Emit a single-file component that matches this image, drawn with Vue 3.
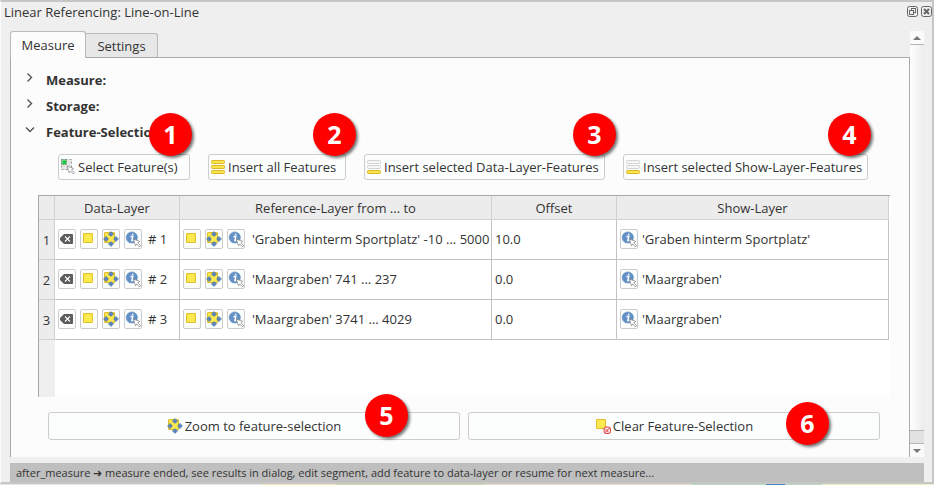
<script setup>
import { ref, h } from 'vue'

const tab = ref('Measure')
const groups = [
  { title: 'Measure:', open: false },
  { title: 'Storage:', open: false },
  { title: 'Feature-Selection:', open: true },
]
const actions = [
  { n: 1, label: 'Select Feature(s)', icon: 'pick' },
  { n: 2, label: 'Insert all Features', icon: 'rowsAll' },
  { n: 3, label: 'Insert selected Data-Layer-Features', icon: 'rowsSel' },
  { n: 4, label: 'Insert selected Show-Layer-Features', icon: 'rowsSel' },
]
const rows = [
  { id: 1, refText: "'Graben hinterm Sportplatz' -10 ... 5000", offset: '10.0', show: "'Graben hinterm Sportplatz'" },
  { id: 2, refText: "'Maargraben' 741 ... 237", offset: '0.0', show: "'Maargraben'" },
  { id: 3, refText: "'Maargraben' 3741 ... 4029", offset: '0.0', show: "'Maargraben'" },
]
const titles = { remove: 'Remove', square: 'Highlight', zoom: 'Zoom to', info: 'Show form' }

const yellow = { fill: '#fce94f', stroke: '#e0bd2a' }
const cursor = (x, y) =>
  h('path', {
    d: 'M0 0L6.500 2.400L4.600 3.800L7.500 6.700L6.300 7.900L3.500 5L2.200 6.800Z',
    transform: `translate(${x} ${y})`, fill: '#fff', stroke: '#888', 'stroke-width': 0.8, 'stroke-linejoin': 'round',
  })
const bar = (y, on) =>
  h('rect', { x: 1.5, y, width: 13, height: 3, rx: 0.8, fill: on ? '#fbe34a' : '#f6f6f6', stroke: on ? '#dab82c' : '#d2d3d3' })

const art = {
  pick: () => [
    h('rect', { x: 1.5, y: 0.5, width: 10, height: 10, fill: '#e6e6e6', stroke: '#999', 'stroke-dasharray': '2 2' }),
    h('rect', { x: 1.5, y: 0.5, width: 5, height: 5, fill: '#b5d9bb', stroke: '#6f9a76', 'stroke-dasharray': '2 1' }),
    h('rect', { x: 2.5, y: 1.5, width: 3.5, height: 3.5, fill: '#0fc93a' }),
    cursor(7, 7),
  ],
  rowsAll: () => [bar(1.5, true), bar(6.5, true), bar(11.5, true)],
  rowsSel: () => [bar(1.5, false), bar(6.5, false), bar(11.5, true)],
  remove: () => [
    h('path', { d: 'M5 3H13Q14 3 14 4V12Q14 13 13 13H5L1 9V7Z', fill: '#5c5c5c' }),
    h('path', { d: 'M6 5.500L11 10.500M11 5.500L6 10.500', stroke: '#fff', 'stroke-width': 1.1 }),
  ],
  square: () => [h('rect', { x: 2.5, y: 2.5, width: 9, height: 9, rx: 0.5, ...yellow })],
  zoom: () => [
    h('rect', { x: 1.5, y: 1.5, width: 10, height: 10, rx: 0.5, ...yellow }),
    h('path', {
      d: 'M8 .5L10.800 3.300L9.200 3.500V5H6.800V3.500L5.200 3.300ZM8 15.500L10.800 12.700L9.200 12.500V11H6.800V12.500L5.200 12.700ZM.5 8L3.300 5.200L3.500 6.800H5V9.200H3.500L3.300 10.800ZM15.500 8L12.700 5.200L12.500 6.800H11V9.200H12.500L12.700 10.800Z',
      fill: '#5b87bd', stroke: '#4c719f', 'stroke-width': 0.5,
    }),
  ],
  info: () => [
    h('circle', { cx: 6.8, cy: 6.5, r: 5.6, fill: '#6391c6', stroke: '#5a86b8', 'stroke-width': 0.6 }),
    h('path', { d: 'M5.500 5.700L7.800 5.200L6.900 9.500L8.300 9.200M7.600 2.700V4', fill: 'none', stroke: '#fff', 'stroke-width': 1.4 }),
    cursor(8.3, 8),
  ],
  clear: () => [
    h('rect', { x: 1.5, y: 1.5, width: 9, height: 9, rx: 0.5, ...yellow }),
    h('rect', { x: 9, y: 9, width: 6.5, height: 6.5, rx: 2, fill: '#fbdcdc', stroke: '#dc4048' }),
    h('path', { d: 'M10 14.500L14.500 10M10.500 11.500L13.500 14', stroke: '#dc3038', 'stroke-width': 0.9 }),
  ],
}
const Icon = (props) =>
  h('svg', { width: 16, height: 16, viewBox: '0 0 16 16', 'aria-hidden': 'true' }, art[props.name]())
Icon.props = ['name']
</script>

<template>
  <div class="dock">
    <header class="titlebar">
      <span>Linear Referencing: Line-on-Line</span>
      <div class="winbtns">
        <button aria-label="Float">
          <svg width="11" height="11" viewBox="0 0 11 11"><rect x=".5" y=".5" width="10" height="10" rx="2" /><rect x="4.500" y="2.500" width="4" height="4" /><rect x="2.500" y="4.500" width="4" height="4" fill="#efefef" /></svg>
        </button>
        <button aria-label="Close">
          <svg width="11" height="11" viewBox="0 0 11 11"><rect x=".5" y=".5" width="10" height="10" rx="2" /><path d="M3 3L8 8M8 3L3 8" stroke-width="2" /></svg>
        </button>
      </div>
    </header>

    <div class="body">
      <div class="main">
        <div class="tabs" role="tablist">
          <button v-for="t in ['Measure', 'Settings']" :key="t" role="tab" class="tab" :class="{ active: tab === t }" :aria-selected="tab === t" @click="tab = t">{{ t }}</button>
        </div>

        <section class="pane">
          <button v-for="g in groups" :key="g.title" class="group" :aria-expanded="g.open">
            <svg width="10" height="10" viewBox="0 0 10 10"><path :d="g.open ? 'M1 2.500L5 6.500L9 2.500' : 'M2.500 0.500L6.500 4.500L2.500 8.500'" /></svg>
            <span>{{ g.title }}</span>
          </button>

          <div class="actions">
            <div v-for="a in actions" :key="a.n" class="slot">
              <button class="btn"><Icon :name="a.icon" />{{ a.label }}</button>
              <span class="badge" :class="'b' + a.n">{{ a.n }}</span>
            </div>
          </div>

          <div class="tablebox">
            <table>
              <colgroup><col class="c0" /><col class="c1" /><col class="c2" /><col class="c1" /><col /></colgroup>
              <thead>
                <tr><th></th><th>Data-Layer</th><th>Reference-Layer from ... to</th><th>Offset</th><th>Show-Layer</th></tr>
              </thead>
              <tbody>
                <tr v-for="r in rows" :key="r.id">
                  <th>{{ r.id }}</th>
                  <td>
                    <div class="cell">
                      <button v-for="i in ['remove', 'square', 'zoom', 'info']" :key="i" class="mini" :aria-label="titles[i]"><Icon :name="i" /></button>
                      <span class="num"># {{ r.id }}</span>
                    </div>
                  </td>
                  <td>
                    <div class="cell">
                      <button v-for="i in ['square', 'zoom', 'info']" :key="i" class="mini" :aria-label="titles[i]"><Icon :name="i" /></button>
                      <span class="reftext">{{ r.refText }}</span>
                    </div>
                  </td>
                  <td><div class="cell">{{ r.offset }}</div></td>
                  <td>
                    <div class="cell">
                      <button class="mini" :aria-label="titles.info"><Icon name="info" /></button>
                      <span>{{ r.show }}</span>
                    </div>
                  </td>
                </tr>
              </tbody>
            </table>
            <div class="gutter"></div>
          </div>

          <div class="footer">
            <div class="slot"><button class="btn big"><Icon name="zoom" />Zoom to feature-selection</button><span class="badge b5">5</span></div>
            <div class="slot"><button class="btn big"><Icon name="clear" />Clear Feature-Selection</button><span class="badge b6">6</span></div>
          </div>
        </section>
      </div>

      <div class="scroll">
        <button aria-label="Scroll up"><svg width="8" height="4" viewBox="0 0 8 4"><path d="M0 4L4 0L8 4Z" /></svg></button>
        <div class="thumb"></div>
        <div class="groove"></div>
        <button aria-label="Scroll down"><svg width="8" height="4" viewBox="0 0 8 4"><path d="M0 0L4 4L8 0Z" /></svg></button>
      </div>
    </div>

    <div class="status">after_measure ➜ measure ended, see results in dialog, edit segment, add feature to data-layer or resume for next measure...</div>
  </div>
  <div class="map"></div>
</template>

<style>
body { background: #efefef; }
</style>

<style scoped>
.dock {
  box-sizing: border-box;
  padding: 0 8px 0 9px;
  border: solid #c6c6c6;
  border-width: 2px 2px 2px 1px;
  border-left-color: #fafafa;
  background: #efefef;
  color: #333;
  font: 13px/18px "Open Sans", "Noto Sans", sans-serif;
}
button {
  margin: 0;
  padding: 0;
  border: 0;
  background: none;
  color: inherit;
  font: inherit;
}
svg { flex: none; display: block; }
.titlebar {
  display: flex;
  justify-content: space-between;
  height: 29px;
  margin: 0 -8px 0 -6px;
}
.titlebar span { padding-top: 1px; }
.winbtns { display: flex; gap: 3px; padding-top: 4px; align-items: flex-start; }
.winbtns svg { fill: none; stroke: #666; }
.body { display: flex; }
.main { flex: 1; min-width: 0; }
.tabs { display: flex; align-items: flex-end; height: 26px; }
.tab {
  width: 72px;
  height: 24px;
  border: 1px solid #b9b9b9;
  border-width: 1px 1px 0 0;
  border-radius: 0 3px 0 0;
  background: #e7e7e7;
}
.tab.active {
  position: relative;
  width: 76px;
  height: 27px;
  margin-bottom: -1px;
  border-width: 1px 1px 0;
  border-radius: 3px 3px 0 0;
  background: #fcfcfc;
}
.pane {
  box-sizing: border-box;
  padding: 9px 19px 17px 27px;
  border: 1px solid #aaa;
  border-bottom: 0;
  background: #fcfcfc;
}
.group {
  display: flex;
  align-items: center;
  gap: 11px;
  height: 26px;
  margin-left: -13px;
  font-weight: 700;
}
.group svg { fill: none; stroke: #555; stroke-width: 1.4; margin-bottom: 4px; }
.actions {
  display: grid;
  grid-template-columns: 132fr 138fr 241fr 245fr;
  gap: 18px;
  padding: 9px 22px 0 20px;
}
.slot { position: relative; min-width: 0; }
.btn {
  box-sizing: border-box;
  display: flex;
  align-items: center;
  gap: 2px;
  width: 100%;
  height: 26px;
  padding: 0 1px;
  border: 1px solid #ccc;
  border-radius: 3px;
  background: #fcfefe;
  white-space: nowrap;
}
.big { height: 28px; justify-content: center; }
.badge {
  position: absolute;
  top: -41px;
  width: 43px;
  height: 43px;
  border-radius: 50%;
  background: #fe0000;
  color: #fff;
  box-shadow: 2px 2px 3px rgba(0, 0, 0, .55);
  font: 700 25px/43px "Open Sans", sans-serif;
  text-align: center;
}
.b1 { right: -2px; }
.b2 { right: -10px; }
.b3 { right: -11px; }
.b4 { right: -3px; }
.b5 { top: -18px; right: 52px; }
.b6 { top: -10px; right: 51px; }
.tablebox {
  display: flex;
  flex-direction: column;
  height: 201px;
  margin-top: 15px;
  border: solid #a8a8a8;
  border-width: 1px 0 0 1px;
  background: #fff;
}
.gutter { flex: 1; width: 16px; background: #efefef; }
table {
  width: calc(100% - 1px);
  table-layout: fixed;
  border-collapse: separate;
  border-spacing: 0;
}
.c0 { width: 16px; }
.c1 { width: 125px; }
.c2 { width: 312px; }
th, td {
  box-sizing: border-box;
  height: 40px;
  padding: 0;
  border: solid #c3c3c3;
  border-width: 0 1px 1px 0;
}
th { background: #ececec; font-weight: 400; border-color: #d2d2d2; }
thead th { height: 24px; }
.cell {
  display: flex;
  align-items: center;
  gap: 4px;
  padding: 0 0 2px 3px;
  white-space: nowrap;
}
.mini {
  box-sizing: border-box;
  display: flex;
  align-items: center;
  justify-content: center;
  width: 18px;
  height: 20px;
  border: 1px solid #ccc;
  border-radius: 2px;
  background: #fcfefe;
}
.num { padding-left: 2px; }
.reftext { padding-left: 3px; }
.footer { display: flex; gap: 8px; padding: 15px 10px 0; }
.footer .slot { flex: 1; }
.scroll { display: flex; flex-direction: column; width: 14px; }
.scroll button {
  display: flex;
  align-items: center;
  justify-content: center;
  height: 13px;
  background: #fafafa;
}
.scroll path { fill: #777; }
.thumb {
  flex: 1;
  border: solid #b5b5b5;
  border-width: 1px 0;
  background: linear-gradient(90deg, #fff, #ececec);
}
.groove { height: 12px; background: #e2e2e2; border-bottom: 1px solid #b5b5b5; }
.status {
  margin-top: 6px;
  padding-left: 6px;
  background: #bfbfbf;
  font-size: 11px;
  line-height: 19px;
  white-space: nowrap;
}
.map {
  height: 1px;
  background: linear-gradient(90deg, #e6e6e6 28%, #f0e4b8 28% 36%, #cbdcae 36% 52%, #eadfc0 52% 74%, #b5dcc2 74% 82%, #4a86bd 82% 84%, #b5dcc2 84% 88%, #edf0c4 88%);
}
</style>
